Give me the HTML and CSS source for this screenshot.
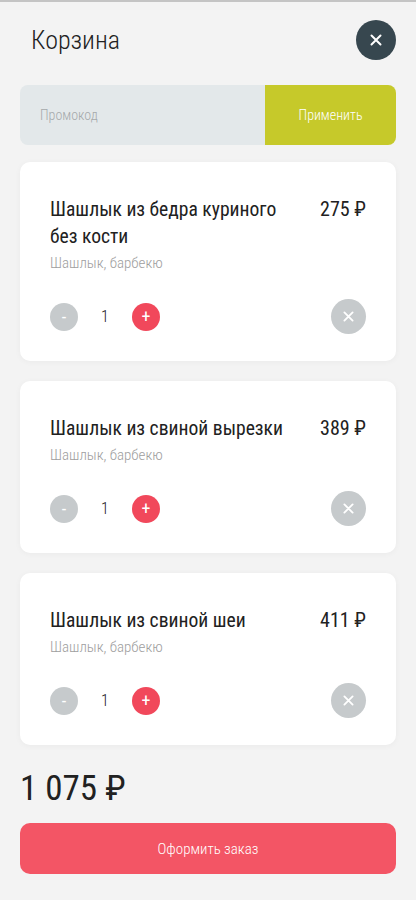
FILE: index.html
```html
<!DOCTYPE html>
<html lang="ru">
<head>
    <meta charset="UTF-8">
    <meta name="viewport" content="width=device-width, initial-scale=1.0">
    <title>Корзина</title>
    <link rel="stylesheet" href="styles.css">
</head>
<body>
    <div class="cart">
        <div class="cart-header">
            <h1>Корзина</h1>
            <button class="close-btn" aria-label="Закрыть">
                <svg width="12" height="12" viewBox="0 0 12 12"><path d="M1.5 1.5l9 9M10.5 1.5l-9 9" stroke="#fff" stroke-width="2" stroke-linecap="round"/></svg>
            </button>
        </div>

        <form class="promo">
            <input type="text" placeholder="Промокод">
            <button type="button">Применить</button>
        </form>

        <div class="item">
            <div class="item-top">
                <div class="item-info">
                    <div class="item-name">Шашлык из бедра куриного без кости</div>
                    <div class="item-cat">Шашлык, барбекю</div>
                </div>
                <div class="item-price">275 ₽</div>
            </div>
            <div class="item-controls">
                <button class="qty-btn minus">-</button>
                <span class="qty">1</span>
                <button class="qty-btn plus">+</button>
                <button class="remove-btn" aria-label="Удалить">
                    <svg width="11" height="11" viewBox="0 0 12 12"><path d="M1.5 1.5l9 9M10.5 1.5l-9 9" stroke="#fff" stroke-width="2" stroke-linecap="round"/></svg>
                </button>
            </div>
        </div>

        <div class="item">
            <div class="item-top">
                <div class="item-info">
                    <div class="item-name">Шашлык из свиной вырезки</div>
                    <div class="item-cat">Шашлык, барбекю</div>
                </div>
                <div class="item-price">389 ₽</div>
            </div>
            <div class="item-controls">
                <button class="qty-btn minus">-</button>
                <span class="qty">1</span>
                <button class="qty-btn plus">+</button>
                <button class="remove-btn" aria-label="Удалить">
                    <svg width="11" height="11" viewBox="0 0 12 12"><path d="M1.5 1.5l9 9M10.5 1.5l-9 9" stroke="#fff" stroke-width="2" stroke-linecap="round"/></svg>
                </button>
            </div>
        </div>

        <div class="item">
            <div class="item-top">
                <div class="item-info">
                    <div class="item-name">Шашлык из свиной шеи</div>
                    <div class="item-cat">Шашлык, барбекю</div>
                </div>
                <div class="item-price">411 ₽</div>
            </div>
            <div class="item-controls">
                <button class="qty-btn minus">-</button>
                <span class="qty">1</span>
                <button class="qty-btn plus">+</button>
                <button class="remove-btn" aria-label="Удалить">
                    <svg width="11" height="11" viewBox="0 0 12 12"><path d="M1.5 1.5l9 9M10.5 1.5l-9 9" stroke="#fff" stroke-width="2" stroke-linecap="round"/></svg>
                </button>
            </div>
        </div>

        <div class="total">1 075 ₽</div>
        <button class="checkout">Оформить заказ</button>
    </div>
</body>
</html>
```

FILE: styles.css
```css
body {
    font-family: 'Roboto Condensed', 'Roboto', sans-serif;
    font-stretch: condensed;
    background-color: #f3f3f3;
    margin: 0;
    border-top: 2px solid #c4c4c4;
    color: #212121;
}

.cart {
    padding: 18px 20px 20px;
}

.cart-header {
    display: flex;
    justify-content: space-between;
    align-items: center;
    padding-left: 11px;
}

h1 {
    margin: 0;
    font-size: 26px;
    font-weight: 300;
}

.close-btn {
    width: 40px;
    height: 40px;
    border-radius: 50%;
    border: none;
    background-color: #37474f;
    display: flex;
    align-items: center;
    justify-content: center;
    padding: 0;
}

.promo {
    display: flex;
    height: 60px;
    margin-top: 25px;
    border-radius: 8px;
    overflow: hidden;
}

.promo input {
    flex: 1;
    border: none;
    background-color: #e3e8ea;
    padding: 0 20px;
    font-family: inherit;
    font-size: 14px;
    font-weight: 300;
    outline: none;
}

.promo input::placeholder {
    color: #a5a9ab;
}

.promo button {
    width: 131px;
    border: none;
    background-color: #c6c92a;
    color: #fff;
    font-family: inherit;
    font-size: 14px;
    font-weight: 300;
}

.item {
    background-color: #fff;
    border-radius: 10px;
    box-shadow: 0 1px 6px rgba(0, 0, 0, 0.04);
    margin-top: 17px;
    padding: 34px 30px 27px;
}

.item + .item {
    margin-top: 20px;
}

.item-top {
    display: flex;
    justify-content: space-between;
    gap: 20px;
}

.item-name {
    font-size: 19.6px;
    line-height: 27px;
}

.item-cat {
    margin-top: 2px;
    font-size: 15px;
    font-weight: 300;
    color: #9e9e9e;
    line-height: 22px;
}

.item-price {
    font-size: 20px;
    line-height: 27px;
    white-space: nowrap;
}

.item-controls {
    display: flex;
    align-items: center;
    margin-top: 25px;
}

.qty-btn {
    width: 28px;
    height: 28px;
    border-radius: 50%;
    border: none;
    color: #fff;
    font-family: inherit;
    font-size: 18px;
    line-height: 28px;
    padding: 0;
}

.minus {
    background-color: #c6cacc;
}

.plus {
    background-color: #f1485b;
}

.qty {
    width: 54px;
    text-align: center;
    font-size: 16px;
    font-weight: 300;
}

.remove-btn {
    margin-left: auto;
    width: 35px;
    height: 35px;
    border-radius: 50%;
    border: none;
    background-color: #c6cacc;
    display: flex;
    align-items: center;
    justify-content: center;
    padding: 0;
}

.total {
    margin-top: 24px;
    font-size: 35px;
    line-height: 40px;
}

.checkout {
    display: block;
    width: 100%;
    height: 51px;
    margin-top: 14px;
    border: none;
    border-radius: 10px;
    background-color: #f35565;
    color: #fff;
    font-family: inherit;
    font-size: 15px;
    font-weight: 300;
}
```
